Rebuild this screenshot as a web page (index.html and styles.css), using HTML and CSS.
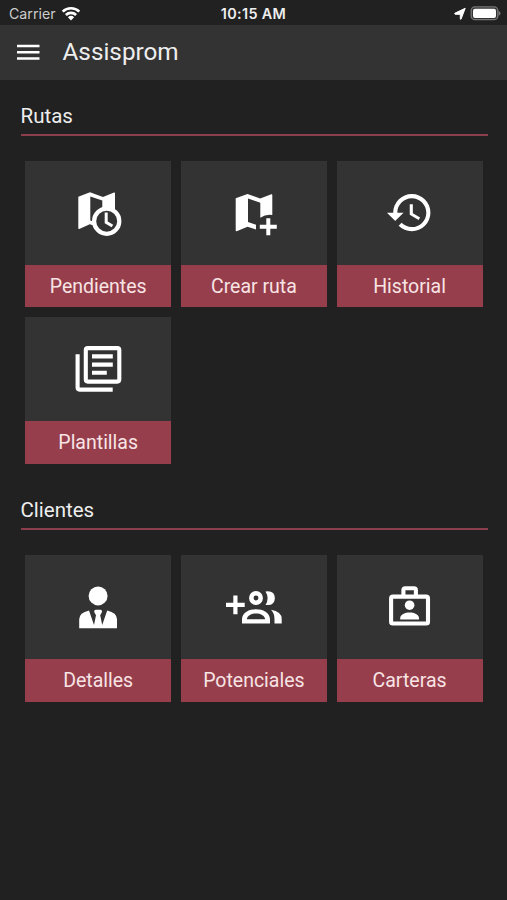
FILE: index.html
```html
<!DOCTYPE html>
<html lang="es">
<head>
<meta charset="utf-8">
<title>Assisprom</title>
<link rel="stylesheet" href="styles.css">
</head>
<body>
<div class="status">
  <div class="carrier"><span>Carrier</span>
    <svg width="20" height="16" viewBox="61 5.5 20 16"><g fill="none" stroke="#fff" stroke-width="2.7"><path d="M62.7 11.1a12 12 0 0 1 16.6 0"/><path d="M65.9 14.4a7.4 7.4 0 0 1 10.2 0"/></g><path fill="#fff" d="M67.9 16.7a4.5 4.5 0 0 1 6.2 0L71 19.9z"/></svg>
  </div>
  <time class="clock">10:15 AM</time>
  <div class="indicators">
    <svg width="50" height="18" viewBox="452 5 50 18"><path fill="#fff" stroke="#fff" stroke-width="1" stroke-linejoin="round" d="M465.2 8.3 461.1 19q-.6.8-.8-.2v-4.5h-5.1q-1.2-.5-.1-1.2z"/><rect x="471.2" y="6.9" width="26.6" height="12.8" rx="3.8" fill="#333" stroke="#777" stroke-width="1.3"/><rect x="473" y="8.7" width="23" height="9.2" rx="2" fill="#fff"/><path fill="#777" d="M498.5 10.5q4 2.8 0 5.6z"/></svg>
  </div>
</div>
<header class="appbar">
  <svg class="menu" width="24" height="18" viewBox="0 0 24 18"><path d="M1 3h22.5M1 9.3h22.5M1 15.6h22.5" stroke="#fff" stroke-width="2.5"/></svg>
  <h1>Assisprom</h1>
</header>
<main>
  <section>
    <h2>Rutas</h2>
    <div class="grid">
      <a class="tile">
        <svg viewBox="25 161 146 104"><path fill="#fff" fill-rule="evenodd" d="M78.3 196.8 90 192.3l13 4.8 11-4.6q1-.2 1 .8V224H90.3l-11 4.9q-1 .3-1-.8zM90.3 196.6V224l12 3V200.5z"/><path fill="#fff" d="M90 220.5l5 1.5v4l-5-1.8z"/><circle cx="106.7" cy="221.2" r="12.6" fill="#333" stroke="#fff" stroke-width="4.2"/><path d="M106.2 212.4v9.9l6.2 3.7" fill="none" stroke="#fff" stroke-width="3"/></svg>
        <span>Pendientes</span>
      </a>
      <a class="tile">
        <svg viewBox="181 161 146 104"><path fill="#fff" d="M235.7 198.3 247.5 194l12.7 4.6 11.1-4.4q1-.2 1 .8v20q-6.5-1-12 2.8V202.7L248 198.5V222l8 2.7v4.7l-8.5-2.7-10.8 4.6q-1 .2-1-.8z"/><path d="M268.3 218.2v17M259.8 226.7h17" stroke="#fff" stroke-width="4"/></svg>
        <span>Crear ruta</span>
      </a>
      <a class="tile">
        <svg viewBox="337 161 146 104"><path fill="#fff" transform="translate(384.9 187.8) scale(2.07)" d="M13 3a9 9 0 0 0-9 9H1l3.89 3.89.07.14L9 12H6c0-3.87 3.13-7 7-7s7 3.13 7 7-3.13 7-7 7c-1.93 0-3.68-.79-4.94-2.06l-1.42 1.42A8.95 8.95 0 0 0 13 21a9 9 0 0 0 0-18zm-1 5v5l4.28 2.54.72-1.21-3.5-2.08V8z"/></svg>
        <span>Historial</span>
      </a>
      <a class="tile">
        <svg viewBox="25 317 146 104"><g fill="none" stroke="#fff" stroke-width="4.1"><rect x="85.8" y="348.1" width="33.5" height="33.5" rx="2"/><path d="M77.6 354.2v33.4q0 2 2 2h33.1M92 356.4h20.8M92 364.6h20.8M92 372.8h14.8"/></g></svg>
        <span>Plantillas</span>
      </a>
    </div>
  </section>
  <section>
    <h2>Clientes</h2>
    <div class="grid">
      <a class="tile">
        <svg viewBox="25 555.5 146 104"><circle cx="98.1" cy="596.4" r="9.5" fill="#fff"/><path fill="#fff" d="M79.2 628.7v-9q0-6.5 9.8-8.8l5 14.6 2-9.7-1.8-3.3q-.2-2.2 1.5-2.2h4.8q1.7 0 1.5 2.2l-1.8 3.3 2 9.7 5-14.6q9.8 2.3 9.8 8.8v9z"/></svg>
        <span>Detalles</span>
      </a>
      <a class="tile">
        <svg viewBox="181 555.5 146 104"><path d="M235.4 596v18.7M226 605.4h18.7" stroke="#fff" stroke-width="4.2"/><circle cx="256" cy="598.5" r="4.7" fill="none" stroke="#fff" stroke-width="4.5"/><g fill="#fff"><path d="M265.5 592q9.2-1.3 9.4 6.7-.4 8.2-9.4 6.7 4.3-6.5 0-13.4z"/><path fill-rule="evenodd" d="M242 624v-4.5c.4-6.6 7.1-9.7 14-9.7s13.6 3.1 14 9.7v4.5zm4.8-4.2h18.4c-.5-3.9-4.9-5.8-9.2-5.8s-8.7 1.9-9.2 5.8z"/><path d="M271 610.3q10.7 1.7 10.7 9.2v4.5h-7.2v-4.5q0-5.5-3.5-9.2z"/></g></svg>
        <span>Potenciales</span>
      </a>
      <a class="tile">
        <svg viewBox="337 555.5 146 104"><g fill="none" stroke="#fff" stroke-width="4.1"><rect x="391.1" y="597.1" width="36.9" height="26.9" rx="1.8"/><path d="M403.4 597v-6.3q0-2 2-2h8.5q2 0 2 2v6.3"/></g><g fill="#fff"><circle cx="409.6" cy="605.7" r="4.8"/><path d="M400.2 619.9v-1.3c0-3.7 5-5.6 9.4-5.6s9.4 1.9 9.4 5.6v1.3z"/></g></svg>
        <span>Carteras</span>
      </a>
    </div>
  </section>
</main>
</body>
</html>
```
FILE: styles.css
```css
* { box-sizing: border-box; }
body {
  margin: 0;
  height: 900px;
  overflow: hidden;
  background: #212121;
  color: #eee;
  font-family: Roboto, "Liberation Sans", sans-serif;
}
svg { display: block; }
.status {
  height: 25px;
  padding: 2px 5px 0 9px;
  display: grid;
  grid-template-columns: 1fr auto 1fr;
  align-items: center;
  font: 14.2px/20px Inter, sans-serif;
}
.carrier { display: flex; align-items: center; gap: 5px; color: #ccc; }
.clock { font-weight: 600; font-size: 14.4px; letter-spacing: .35px; color: #eee; margin-left: -4px; }
.indicators { justify-self: end; }
.appbar {
  height: 54.5px;
  background: #333;
  display: flex;
  align-items: center;
  padding: 0 16px;
  gap: 22.5px;
}
h1 { margin: 0; font-size: 24.3px; font-weight: 400; line-height: 32px; }
main { padding: 20.5px 19.5px 0 20.5px; }
section { margin-bottom: 30.6px; }
h2 {
  margin: 0;
  height: 36px;
  padding-top: 3px;
  border-bottom: 2px solid #8d3e4c;
  font-size: 20.5px;
  font-weight: 400;
  line-height: 26px;
}
.grid {
  display: grid;
  grid-template-columns: repeat(3, 146px);
  gap: 10px 9.7px;
  padding: 25px 0 0 4.7px;
}
.tile {
  height: 146.4px;
  background: #333;
  display: flex;
  flex-direction: column;
}
.tile svg { width: 146px; height: 104px; }
.tile span {
  flex: 1;
  padding-top: 1px;
  background: #963e4c;
  color: #f8e4e4;
  text-align: center;
  font-size: 19.5px;
  line-height: 41.4px;
}
```
